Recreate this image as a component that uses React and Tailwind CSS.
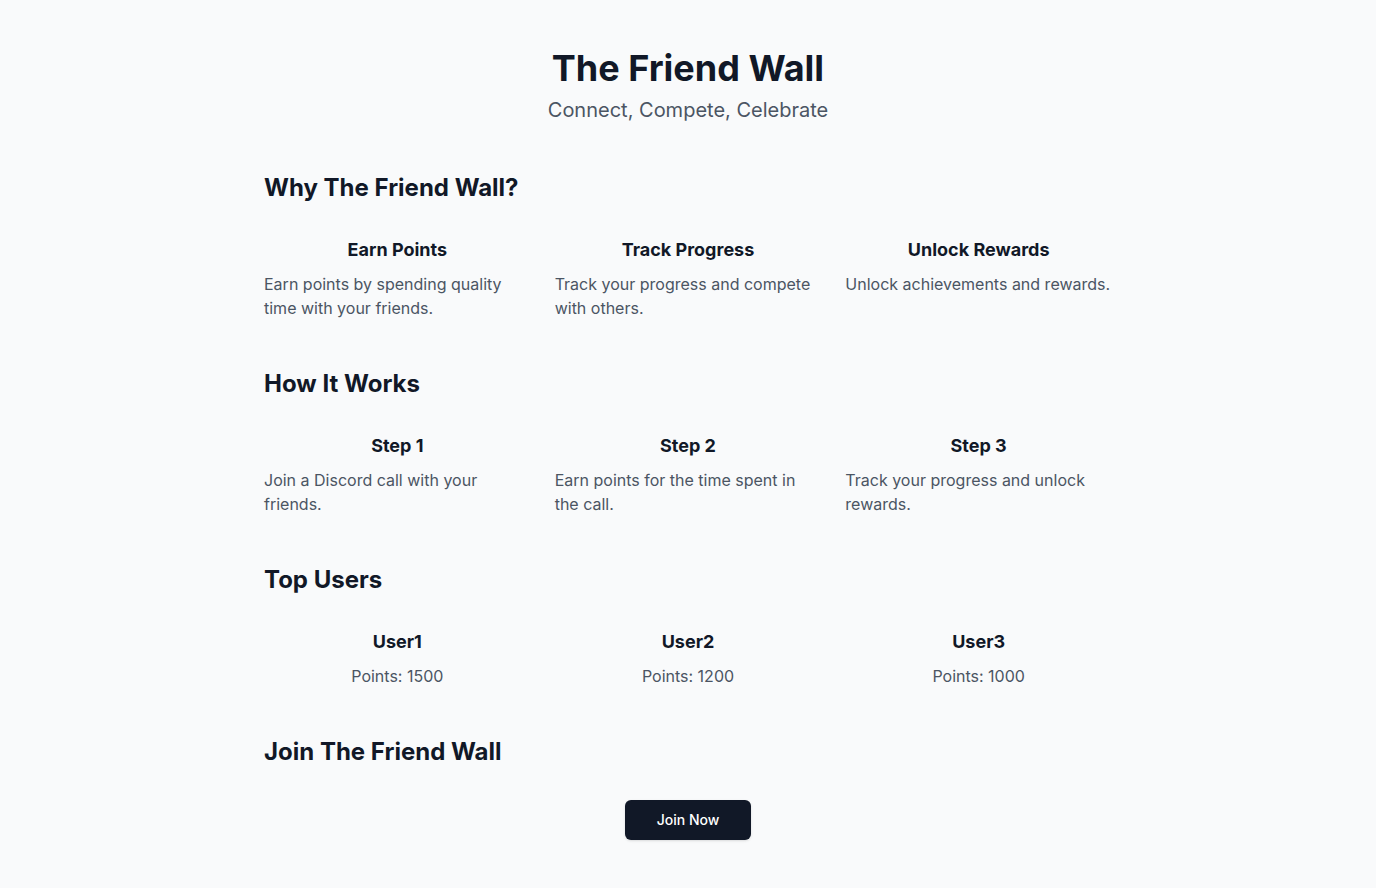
import React from "react";

const why = [
  { t: "Earn Points", d: "Earn points by spending quality time with your friends." },
  { t: "Track Progress", d: "Track your progress and compete with others." },
  { t: "Unlock Rewards", d: "Unlock achievements and rewards." },
];
const how = [
  { t: "Step 1", d: "Join a Discord call with your friends." },
  { t: "Step 2", d: "Earn points for the time spent in the call." },
  { t: "Step 3", d: "Track your progress and unlock rewards." },
];
const users = [
  { t: "User1", p: 1500 },
  { t: "User2", p: 1200 },
  { t: "User3", p: 1000 },
];

export default function App() {
  return (
    <div className="min-h-screen bg-[#f9fafb] text-[#111827]" style={{ fontFamily: "Inter, 'Noto Sans', sans-serif" }}>
      <div className="max-w-4xl mx-auto px-6 py-12">
        <header className="text-center">
          <h1 className="text-4xl font-bold mb-2">The Friend Wall</h1>
          <p className="text-xl text-[#4b5563]">Connect, Compete, Celebrate</p>
        </header>

        <section className="mt-12">
          <h2 className="text-2xl font-bold mb-8">Why The Friend Wall?</h2>
          <div className="grid grid-cols-3 gap-6">
            {why.map((c) => (
              <div key={c.t}>
                <h3 className="text-lg font-bold text-center mb-2">{c.t}</h3>
                <p className="text-base text-[#4b5563]">{c.d}</p>
              </div>
            ))}
          </div>
        </section>

        <section className="mt-12">
          <h2 className="text-2xl font-bold mb-8">How It Works</h2>
          <div className="grid grid-cols-3 gap-6">
            {how.map((c) => (
              <div key={c.t}>
                <h3 className="text-lg font-bold text-center mb-2">{c.t}</h3>
                <p className="text-base text-[#4b5563]">{c.d}</p>
              </div>
            ))}
          </div>
        </section>

        <section className="mt-12">
          <h2 className="text-2xl font-bold mb-8">Top Users</h2>
          <div className="grid grid-cols-3 gap-6">
            {users.map((u) => (
              <div key={u.t} className="text-center">
                <h3 className="text-lg font-bold mb-2">{u.t}</h3>
                <p className="text-base text-[#4b5563]">Points: {u.p}</p>
              </div>
            ))}
          </div>
        </section>

        <section className="mt-12">
          <h2 className="text-2xl font-bold mb-8">Join The Friend Wall</h2>
          <div className="flex justify-center">
            <button className="h-10 px-8 rounded-md bg-[#111827] text-white text-sm font-medium shadow-sm">
              Join Now
            </button>
          </div>
        </section>
      </div>
    </div>
  );
}
